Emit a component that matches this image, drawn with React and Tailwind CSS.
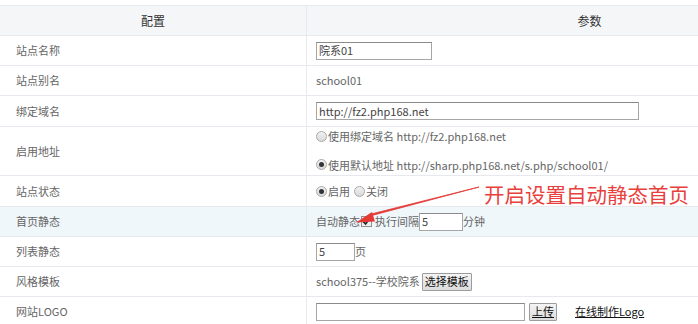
import React from 'react';

const font = { fontFamily: '"Microsoft YaHei", "Noto Sans CJK SC", "Noto Sans", sans-serif' };

const Radio = ({ checked }) => (
  <span className="inline-flex items-center justify-center w-[11px] h-[11px] rounded-full border border-[#a9a9a9] bg-gradient-to-b from-[#f2f2f2] to-[#d9d9d9] mr-[1px] align-middle">
    {checked && <span className="w-[5px] h-[5px] rounded-full bg-[#333]" />}
  </span>
);

const Row = ({ label, children, h = 'h-[30px]', bg = '' }) => (
  <div className={`flex border-b border-[#e6e9ed] ${h} ${bg}`}>
    <div className="w-[307px] shrink-0 border-r border-[#e6e9ed] flex items-center pl-4 text-[#666]">
      {label}
    </div>
    <div className="flex-1 flex items-center pl-[9px] text-[#666]">{children}</div>
  </div>
);

const Field = ({ w, value = '' }) => (
  <span className={`inline-flex items-center h-[18px] ${w} border border-[#a6a6a6] border-t-[#8a8a8a] bg-white px-[2px] text-[11px] text-[#444]`}>
    {value}
  </span>
);

const Btn = ({ children }) => (
  <span className="inline-flex items-center h-[18px] px-[2px] border border-[#9c9c9c] bg-gradient-to-b from-[#f4f4f4] to-[#dcdcdc] text-[11px] text-[#111] rounded-[1px]">
    {children}
  </span>
);

export default function App() {
  return (
    <div className="relative w-[698px] h-[324px] overflow-hidden bg-white pt-[5px] text-[11px]" style={font}>
      <div className="w-[872px] border-t border-[#e6e9ed]">
        <div className="flex h-[30px] bg-[#f5f6f8] border-b border-[#e6e9ed] text-[12px] text-[#333]">
          <div className="w-[307px] shrink-0 border-r border-[#e6e9ed] flex items-center justify-center">配置</div>
          <div className="flex-1 flex items-center justify-center">参数</div>
        </div>
        <Row label="站点名称">
          <Field w="w-[116px]" value="院系01" />
        </Row>
        <Row label="站点别名">
          <span>school01</span>
        </Row>
        <Row label="绑定域名" h="h-[31px]">
          <Field w="w-[323px]" value="http://fz2.php168.net" />
        </Row>
        <Row label="启用地址" h="h-[49px]">
          <div className="flex flex-col gap-[12px] -mt-[1px]">
            <div className="flex items-center">
              <Radio />
              <span>使用绑定域名 http://fz2.php168.net</span>
            </div>
            <div className="flex items-center">
              <Radio checked />
              <span>使用默认地址 http://sharp.php168.net/s.php/school01/</span>
            </div>
          </div>
        </Row>
        <Row label="站点状态" h="h-[31px]">
          <div className="flex items-center">
            <Radio checked />
            <span>启用</span>
            <span className="w-[4px]" />
            <Radio />
            <span>关闭</span>
          </div>
        </Row>
        <Row label="首页静态" bg="bg-[#f0f7fb]">
          <div className="flex items-center">
            <span>自动静态</span>
            <span className="inline-flex items-center justify-center w-[11px] h-[11px] border border-[#8f8f8f] bg-[#eee] mx-[1px]">
              <svg viewBox="0 0 10 10" className="w-[9px] h-[9px]">
                <path d="M1.5 5.2 L4 7.8 L8.6 1.8" fill="none" stroke="#222" strokeWidth="1.8" />
              </svg>
            </span>
            <span className="ml-[2px]">执行间隔</span>
            <Field w="w-[44px]" value="5" />
            <span>分钟</span>
          </div>
        </Row>
        <Row label="列表静态">
          <div className="flex items-center">
            <Field w="w-[39px]" value="5" />
            <span>页</span>
          </div>
        </Row>
        <Row label="风格模板">
          <div className="flex items-center">
            <span className="mr-[2px]">school375--学校院系</span>
            <Btn>选择模板</Btn>
          </div>
        </Row>
        <Row label="网站LOGO">
          <div className="flex items-center">
            <Field w="w-[209px]" />
            <span className="ml-[4px]">
              <Btn>
                <span className="underline">上传</span>
              </Btn>
            </span>
            <a className="ml-[18px] text-[#111] underline">在线制作Logo</a>
          </div>
        </Row>
      </div>

      <svg className="absolute left-0 top-0 pointer-events-none" width="698" height="324">
        <path d="M479 187 L370 216 L369.2 214.5 Z" fill="#e53935" stroke="#e53935" strokeWidth="0.8" />
        <path d="M356 222.5 L372 212 L375 221.5 Z" fill="#e53935" />
      </svg>
      <div className="absolute left-[484px] top-[180px] text-[20.5px] leading-[28px] text-[#e8403c] whitespace-nowrap">
        开启设置自动静态首页
      </div>
    </div>
  );
}
